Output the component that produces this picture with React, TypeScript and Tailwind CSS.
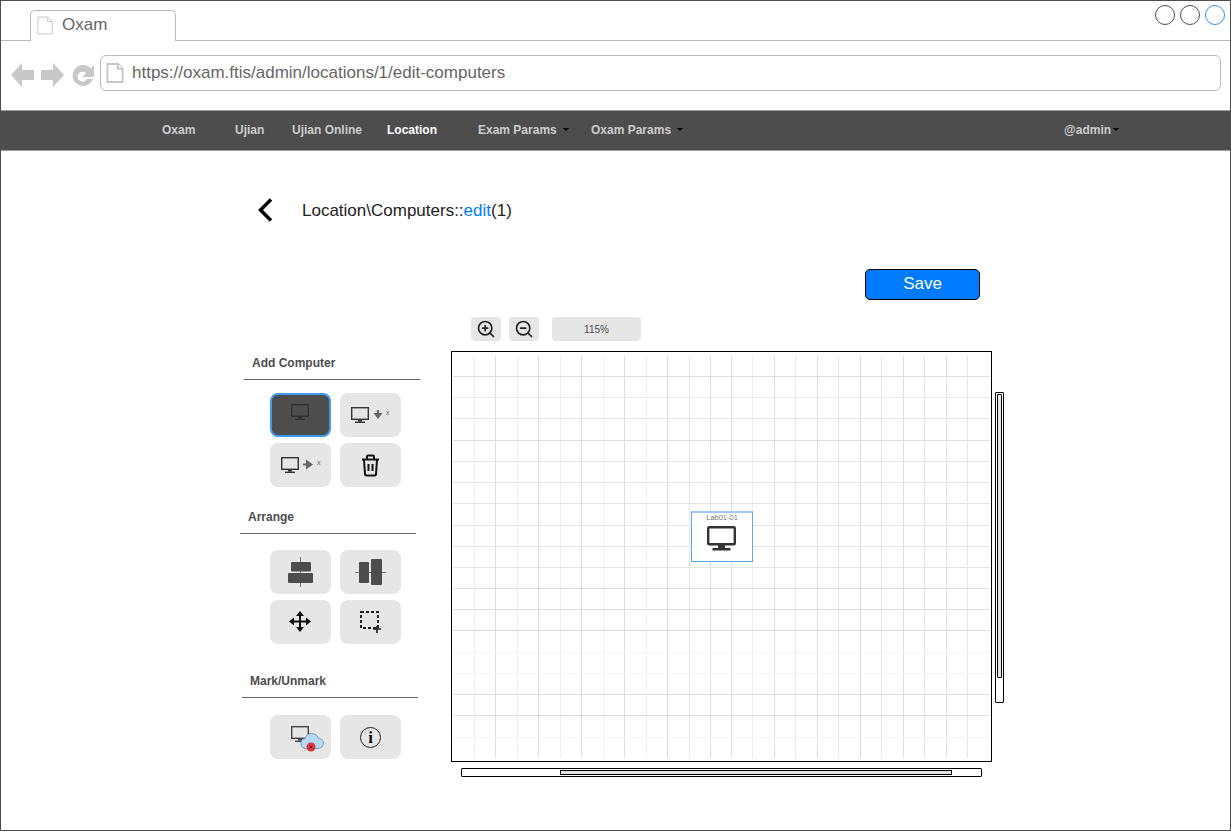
import { ZoomIn, ZoomOut } from 'lucide-react';

const NAV_ITEMS = [
  { label: 'Oxam', width: 'w-[73px]', color: 'text-[#cccccc]' },
  { label: 'Ujian', width: 'w-[57px]', color: 'text-[#cccccc]' },
  { label: 'Ujian Online', width: 'w-[95px]', color: 'text-[#cccccc]' },
  { label: 'Location', width: 'w-[91px]', color: 'text-white' },
  { label: 'Exam Params', width: 'w-[113px]', color: 'text-[#cccccc]', caret: 'ml-[6px]' },
  { label: 'Oxam Params', width: 'w-[473px]', color: 'text-[#cccccc]', caret: 'ml-[6px]' },
  { label: '@admin', width: 'w-[70px]', color: 'text-[#cccccc]', caret: 'ml-[2px]' },
];

// grid lines, pixel position inside the canvas and the shade they show at
const V_LINES: [number, string][] = [
  [22, '#f0f0f0'], [43, '#dddddd'], [65, '#f0f0f0'], [86, '#dddddd'], [108, '#f0f0f0'], [129, '#dddddd'],
  [151, '#f0f0f0'], [172, '#dddddd'], [194, '#f0f0f0'], [215, '#dddddd'], [237, '#e8e8e8'], [258, '#dddddd'],
  [279, '#e0e0e0'], [300, '#eeeeee'], [322, '#dddddd'], [343, '#e8e8e8'], [365, '#dddddd'], [386, '#e8e8e8'],
  [408, '#dddddd'], [429, '#e8e8e8'], [451, '#dddddd'], [472, '#e4e4e4'], [494, '#e0e0e0'], [515, '#e6e6e6'],
];
const H_LINES: [number, string][] = [
  [24, '#e0e0e0'], [45, '#ebebeb'], [66, '#e4e4e4'], [88, '#e0e0e0'], [109, '#e4e4e4'], [130, '#e4e4e4'],
  [151, '#e4e4e4'], [173, '#e4e4e4'], [194, '#e4e4e4'], [215, '#e4e4e4'], [236, '#e0e0e0'], [257, '#e0e0e0'],
  [278, '#dcdcdc'], [300, '#f4f4f4'], [321, '#f4f4f4'], [342, '#e0e0e0'], [363, '#e0e0e0'], [385, '#f4f4f4'],
];

function Caret({ className }: { className: string }) {
  return <span className={`inline-block h-0 w-0 border-x-[3px] border-t-[3px] border-x-transparent border-t-black ${className}`} />;
}

function PageIcon({ className }: { className: string }) {
  return (
    <svg viewBox="0 0 18 21" fill="none" className={className}>
      <path d="M1 1h11l5 5v14H1z" />
      <path d="M12 1v5h5" />
    </svg>
  );
}

function Monitor({ x, y, color = '#333333' }: { x: number; y: number; color?: string }) {
  return (
    <g transform={`translate(${x} ${y})`}>
      <rect x="0.7" y="0.7" width="16.6" height="11.600" fill="none" stroke={color} strokeWidth="1.400" />
      <rect x="7" y="13" width="4" height="1.600" fill={color} />
      <rect x="4" y="14.600" width="10" height="1.400" fill={color} />
    </g>
  );
}

function ToolButton({ children, active }: { children: React.ReactNode; active?: boolean }) {
  return (
    <button
      type="button"
      className={`h-[44px] w-[61px] overflow-hidden rounded-[8px] ${
        active ? 'border-2 border-[#3f9bf0] bg-[#4d4d4d]' : 'bg-[#e6e6e6]'
      }`}
    >
      {children}
    </button>
  );
}

function ToolSvg({ children, inset }: { children: React.ReactNode; inset?: boolean }) {
  return (
    <svg viewBox={inset ? '2 2 57 40' : '0 0 61 44'} className="block h-full w-full">
      {children}
    </svg>
  );
}

function SectionTitle({ title, className }: { title: string; className: string }) {
  return (
    <div className={`flex h-[29px] w-[176px] items-center border-b border-[#666666] pb-[5px] pl-[8px] text-[12px] font-bold text-[#4d4d4d] ${className}`}>
      {title}
    </div>
  );
}

export default function App() {
  return (
    <div className="flex h-[831px] w-[1231px] flex-col overflow-hidden border border-[#4d4d4d] bg-white font-['Liberation_Sans',Arial,sans-serif]">
      {/* Browser chrome */}
      <div className="flex h-[40px] items-end justify-between border-b border-[#bbbbbb] pl-[29px] pr-[5px]">
        <div className="-mb-px flex h-[31px] w-[146px] items-center rounded-t-[5px] border border-b-0 border-[#bbbbbb] bg-white pb-[2px] pl-[6px]">
          <PageIcon className="h-[19px] w-[16px] stroke-[#c4c4c4]" />
          <span className="ml-[9px] text-[17px] text-[#666666]">Oxam</span>
        </div>
        <div className="mb-[15px] flex gap-[5px]">
          <span className="h-[20px] w-[20px] rounded-full border border-[#4d4d4d]" />
          <span className="h-[20px] w-[20px] rounded-full border border-[#4d4d4d]" />
          <span className="h-[20px] w-[20px] rounded-full border border-[#2a95f5]" />
        </div>
      </div>
      <div className="flex h-[69px] items-center pb-[1px] pl-[10px] pr-[9px]">
        <svg viewBox="0 0 84 26" className="h-[26px] w-[84px]" fill="#c8c8c8">
          <path d="M0 13 11 1v7h12v10H11v7z" />
          <path d="M53 13 42 1v7H30v10h12v7z" />
          <path d="M80 6.500A10.500 10.500 0 1 0 82 17h-6a5 5 0 1 1-1-6l-3.500 4H83V3z" />
        </svg>
        <div className="mb-[4px] ml-[5px] flex h-[36px] flex-1 items-center rounded-[6px] border border-[#bbbbbb] pl-[5px]">
          <PageIcon className="h-[20px] w-[18px] fill-[#ffffff] stroke-[#c8c8c8] stroke-2" />
          <span className="ml-[8px] text-[17px] text-[#666666]">https://oxam.ftis/admin/locations/1/edit-computers</span>
        </div>
      </div>

      {/* Navbar */}
      <nav className="flex h-[41px] items-center border-y border-[#a0a0a0] bg-[#4d4d4d] pb-[2px] pl-[161px] text-[12px] font-bold">
        {NAV_ITEMS.map((item) => (
          <div key={item.label} className={`flex items-center ${item.width} ${item.color}`}>
            {item.label}
            {item.caret && <Caret className={item.caret} />}
          </div>
        ))}
      </nav>

      {/* Page body */}
      <main className="flex flex-col pl-[239px]">
        <div className="mt-[47px] flex h-[24px] items-center">
          <svg viewBox="0 0 15 24" className="ml-[18px] h-[24px] w-[15px] shrink-0">
            <path d="M13 1.500 2.500 12 13 22.500" fill="none" stroke="#000000" strokeWidth="3.500" />
          </svg>
          <h1 className="ml-[29px] mt-[1px] text-[17px] text-[#222222]">
            Location\Computers::<span className="text-[#007bff]">edit</span>(1)
          </h1>
        </div>

        <button
          type="button"
          className="ml-[625px] mt-[47px] h-[31px] w-[115px] rounded-[5px] border border-black bg-[#007bff] pb-[2px] text-[17px] text-white"
        >
          Save
        </button>

        <div className="ml-[231px] mt-[17px] flex h-[24px] text-[#222222]">
          <span className="flex h-[24px] w-[30px] items-center justify-center rounded-[4px] bg-[#e6e6e6] pr-[1px]">
            <ZoomIn size={20} strokeWidth={2} />
          </span>
          <span className="ml-[8px] flex h-[24px] w-[30px] items-center justify-center rounded-[4px] bg-[#e6e6e6] pr-[1px]">
            <ZoomOut size={20} strokeWidth={2} />
          </span>
          <span className="ml-[13px] flex h-[24px] w-[89px] items-center justify-center rounded-[4px] bg-[#e6e6e6] text-[10px] text-[#4d4d4d]">
            115%
          </span>
        </div>

        <div className="mt-[10px] flex">
          {/* Tools */}
          <aside className="w-[211px] shrink-0">
            <SectionTitle title="Add Computer" className="ml-[4px]" />
            <div className="ml-[30px] mt-[13px] grid w-[131px] grid-cols-2 gap-x-[9px] gap-y-[6px]">
              <ToolButton active>
                <ToolSvg inset>
                  <Monitor x={21} y={11} />
                </ToolSvg>
              </ToolButton>
              <ToolButton>
                <ToolSvg>
                  <Monitor x={11} y={14} />
                  <path d="M37 17h2v3h3.500L38 26l-4.500-6H37z" fill="#666666" />
                  <text x="46" y="22" fontSize="7" fill="#666666">x</text>
                </ToolSvg>
              </ToolButton>
              <ToolButton>
                <ToolSvg>
                  <Monitor x={11} y={14} />
                  <path d="M33 20.500h3v-4l7 5-7 5v-4h-3z" fill="#666666" />
                  <text x="47" y="22" fontSize="7" fill="#666666">x</text>
                </ToolSvg>
              </ToolButton>
              <ToolButton>
                <ToolSvg>
                  <path
                    d="M22 16.500h17M27 15.500v-2a1 1 0 0 1 1-1h5a1 1 0 0 1 1 1v2M24 17l1 14a1.500 1.500 0 0 0 1.500 1.500h8a1.500 1.500 0 0 0 1.500-1.500l1-14M28.500 21v7M32.500 21v7"
                    fill="none"
                    stroke="#111111"
                    strokeWidth="2"
                  />
                </ToolSvg>
              </ToolButton>
            </div>

            <SectionTitle title="Arrange" className="mt-[18px]" />
            <div className="ml-[30px] mt-[16px] grid w-[131px] grid-cols-2 gap-x-[9px] gap-y-[6px]">
              <ToolButton>
                <ToolSvg>
                  <path d="M30.500 7v30" stroke="#777777" />
                  <rect x="21" y="12" width="20" height="9.500" rx="1" fill="#4d4d4d" />
                  <rect x="18" y="23" width="25" height="10" rx="1" fill="#4d4d4d" />
                </ToolSvg>
              </ToolButton>
              <ToolButton>
                <ToolSvg>
                  <path d="M15 22.500h31" stroke="#777777" />
                  <rect x="19" y="12" width="10" height="21" rx="1" fill="#4d4d4d" />
                  <rect x="31" y="9" width="11" height="26" rx="1" fill="#4d4d4d" />
                </ToolSvg>
              </ToolButton>
              <ToolButton>
                <ToolSvg>
                  <path d="M30 14v15M22 21.500h16" stroke="#111111" strokeWidth="2" />
                  <path d="M30 11l4 5h-8zM30 32l4-5h-8zM19 21.500l5-4v8zM41 21.500l-5-4v8z" fill="#111111" />
                </ToolSvg>
              </ToolButton>
              <ToolButton>
                <ToolSvg>
                  <rect x="21" y="12" width="17" height="16" fill="none" stroke="#222222" strokeWidth="2" strokeDasharray="3 2" />
                  <path d="M37 26v7M33 29h8" stroke="#222222" strokeWidth="1.600" />
                </ToolSvg>
              </ToolButton>
            </div>

            <SectionTitle title="Mark/Unmark" className="ml-[2px] mt-[25px]" />
            <div className="ml-[30px] mt-[17px] grid w-[131px] grid-cols-2 gap-x-[9px]">
              <ToolButton>
                <ToolSvg>
                  <Monitor x={21} y={11} color="#444444" />
                  <path
                    d="M36 33.500a5 5 0 0 1-1-9.900 7 7 0 0 1 13.300-.5 5 5 0 0 1-.3 10.400z"
                    fill="#b9d8f3"
                    stroke="#5b8db8"
                    strokeWidth="0.800"
                  />
                  <circle cx="41" cy="32" r="4.500" fill="#d9363e" />
                  <path d="M39.500 30.500l3 3m0-3l-3 3" stroke="#6b1015" strokeWidth="0.900" />
                </ToolSvg>
              </ToolButton>
              <ToolButton>
                <div className="flex h-full items-center justify-center">
                  <span className="flex h-[21px] w-[21px] items-center justify-center rounded-full border border-[#222222] font-['Liberation_Serif',serif] text-[17px] font-bold leading-none text-[#111111]">
                    i
                  </span>
                </div>
              </ToolButton>
            </div>
          </aside>

          {/* Canvas and scrollbars */}
          <div className="flex flex-col">
            <div className="flex">
              <div className="relative h-[411px] w-[541px] border border-black bg-white">
                <svg className="block h-full w-full" viewBox="0 0 539 409">
                  {V_LINES.map(([x, shade]) => (
                    <path key={x} d={`M${x + 0.5} 4V406`} stroke={shade} fill="none" />
                  ))}
                  {H_LINES.map(([y, shade]) => (
                    <path key={y} d={`M1 ${y + 0.5}H538`} stroke={shade} fill="none" />
                  ))}
                </svg>
                <div className="absolute left-[239px] top-[159px] flex h-[51px] w-[62px] flex-col items-center border border-t-2 border-[#5aa5ec] border-t-[#9ccbf7] bg-white">
                  <span className="text-[7.500px] leading-[10px] text-[#777777]">Lab01-01</span>
                  <svg viewBox="0 0 29 25" className="mr-[1px] mt-[3px] h-[25px] w-[29px]">
                    <rect x="1.200" y="1.200" width="26.600" height="17" rx="1" fill="none" stroke="#333333" strokeWidth="2.400" />
                    <rect x="11" y="19" width="7" height="3" fill="#333333" />
                    <rect x="5.500" y="22" width="18" height="2.500" fill="#333333" />
                  </svg>
                </div>
              </div>
              <div className="ml-[3px] mt-[41px] h-[311px] w-[9px] rounded-[1px] border border-black bg-white p-[1px]">
                <div className="h-[284px] w-full rounded-[1px] border border-black bg-[#e6e6e6]" />
              </div>
            </div>
            <div className="ml-[10px] mt-[6px] h-[9px] w-[521px] rounded-[1px] border border-black bg-white py-[1px] pl-[98px]">
              <div className="h-full w-[392px] border border-black bg-[#e6e6e6]" />
            </div>
          </div>
        </div>
      </main>
    </div>
  );
}
